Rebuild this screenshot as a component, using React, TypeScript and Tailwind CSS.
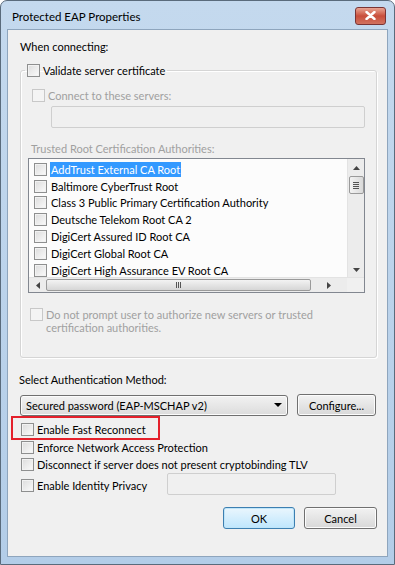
import React from 'react';

const font = "font-['Segoe_UI','Lato',sans-serif]";

const certs = [
  'AddTrust External CA Root',
  'Baltimore CyberTrust Root',
  'Class 3 Public Primary Certification Authority',
  'Deutsche Telekom Root CA 2',
  'DigiCert Assured ID Root CA',
  'DigiCert Global Root CA',
  'DigiCert High Assurance EV Root CA',
];

function Check({ disabled }: { disabled?: boolean }) {
  return (
    <span
      className={`inline-block w-[13px] h-[13px] shrink-0 border ${
        disabled
          ? 'border-[#c8c8c8] bg-[#f4f4f4]'
          : 'border-[#8e8f8f] bg-linear-to-br from-[#dcdcdc] to-[#fbfbfb] shadow-[inset_0_0_0_1px_#f2f2f2]'
      }`}
    />
  );
}

function Button({ label, primary }: { label: string; primary?: boolean }) {
  return (
    <div
      className={`h-[22px] flex items-center justify-center rounded-[3px] border text-black ${
        primary
          ? 'border-[#3c7fb1] bg-linear-to-b from-[#eaf6fd] to-[#bee6fd] shadow-[inset_0_0_0_1px_#bfe5f9]'
          : 'border-[#707070] bg-linear-to-b from-[#f2f2f2] to-[#d8d8d8] shadow-[inset_0_0_0_1px_#fcfcfc]'
      }`}
    >
      {label}
    </div>
  );
}

export default function App() {
  return (
    <div className={`w-[395px] h-[565px] flex flex-col rounded-t-[7px] border border-[#5a6b7c] bg-linear-to-b from-[#c4d9ee] to-[#b3cde8] ${font} text-[11px] leading-[15px] text-black`}>
      {/* title bar */}
      <div className="h-[28px] shrink-0 flex items-center justify-between pl-[11px] pr-[8px] pt-[2px]">
        <span className="text-[11.5px]">Protected EAP Properties</span>
        <div className="w-[31px] h-[18px] mb-[1px] rounded-[3px] border border-[#7a3434] bg-linear-to-b from-[#e8a493] via-[#c84d3a] to-[#d1725f] flex items-center justify-center">
          <svg width="11" height="9" viewBox="0 0 11 9">
            <path d="M1.5 1 L9.5 8 M9.5 1 L1.5 8" stroke="#fff" strokeWidth="2.4" strokeLinecap="round" />
          </svg>
        </div>
      </div>

      {/* client area */}
      <div className="flex-1 mx-[6px] mb-[7px] bg-[#f0f0f0] border border-[#8ea5bd] flex flex-col pl-[11px] pr-[10px]">
        <div className="mt-[9px] ml-[1px]">When connecting:</div>

        <fieldset className="mt-[9px] ml-[1px] h-[295px] border border-[#d5d5d5] rounded-[3px] shadow-[inset_1px_1px_0_#fff,1px_1px_0_#fff] px-[7px]">
          <legend className="-ml-[3px] px-[2px] flex items-center gap-[3px]">
            <Check />
            <span>Validate server certificate</span>
          </legend>

          <div className="mt-[10px] ml-[4px] flex items-center gap-[3px] text-[#a0a0a0]">
            <Check disabled />
            <span>Connect to these servers:</span>
          </div>
          <div className="mt-[3px] ml-[23px] mr-[4px] h-[22px] border border-[#cfcfcf] rounded-[2px] bg-[#f0f0f0]" />

          <div className="mt-[13px] ml-[3px] text-[#a0a0a0]">Trusted Root Certification Authorities:</div>

          <div className="mt-[2px] mr-[4px] h-[135px] border border-[#828790] bg-[#fcfcfc] flex flex-col">
            <div className="flex-1 flex min-h-0">
              <div className="flex-1 pt-[2px] pl-[5px] flex flex-col overflow-hidden">
                {certs.map((c, i) => (
                  <div key={c} className="h-[16.8px] shrink-0 flex items-center gap-[4px]">
                    <Check />
                    <span className={i === 0 ? 'bg-[#3399ff] text-white px-[1px] -ml-[1px]' : ''}>{c}</span>
                  </div>
                ))}
              </div>
              {/* vertical scrollbar */}
              <div className="w-[17px] bg-[#ececec] border-l border-[#e3e3e3] flex flex-col items-center">
                <div className="h-[17px] flex items-center justify-center">
                  <svg width="7" height="4" viewBox="0 0 7 4"><path d="M0 4 L3.5 0 L7 4 Z" fill="#444" /></svg>
                </div>
                <div className="w-[15px] h-[18px] rounded-[2px] border border-[#9a9a9a] bg-linear-to-r from-[#f3f3f3] to-[#d9d9d9] flex flex-col items-center justify-center gap-[1px]">
                  <span className="w-[6px] h-px bg-[#555]" />
                  <span className="w-[6px] h-px bg-[#555]" />
                  <span className="w-[6px] h-px bg-[#555]" />
                  <span className="w-[6px] h-px bg-[#555]" />
                </div>
                <div className="flex-1" />
                <div className="h-[14px] flex items-center justify-center">
                  <svg width="7" height="4" viewBox="0 0 7 4"><path d="M0 0 L3.5 4 L7 0 Z" fill="#444" /></svg>
                </div>
              </div>
            </div>
            {/* horizontal scrollbar */}
            <div className="h-[15px] shrink-0 flex bg-[#ececec] border-t border-[#e3e3e3]">
              <div className="w-[17px] flex items-center justify-center">
                <svg width="4" height="7" viewBox="0 0 4 7"><path d="M4 0 L0 3.5 L4 7 Z" fill="#444" /></svg>
              </div>
              <div className="w-[265px] my-px rounded-[2px] border border-[#9a9a9a] bg-linear-to-b from-[#f3f3f3] to-[#d6d6d6] flex items-center justify-center">
                <div className="flex gap-[1px] h-[6px]">
                  <span className="w-px bg-[#555]" />
                  <span className="w-px bg-[#555]" />
                  <span className="w-px bg-[#555]" />
                </div>
              </div>
              <div className="flex-1 flex items-center justify-center">
                <svg width="4" height="7" viewBox="0 0 4 7"><path d="M0 0 L4 3.5 L0 7 Z" fill="#444" /></svg>
              </div>
              <div className="w-[17px] bg-[#f0f0f0]" />
            </div>
          </div>

          <div className="mt-[15px] ml-[2px] flex items-start gap-[3px] text-[#a0a0a0] leading-[13px]">
            <Check disabled />
            <span>
              Do not prompt user to authorize new servers or trusted
              <br />
              certification authorities.
            </span>
          </div>
        </fieldset>

        <div className="mt-[14px]">Select Authentication Method:</div>

        <div className="mt-[7px] flex items-center">
          <div className="w-[268px] h-[21px] ml-[1px] rounded-[3px] border border-[#707070] bg-linear-to-b from-[#f2f2f2] to-[#dcdcdc] shadow-[inset_0_0_0_1px_#fcfcfc] flex items-center justify-between pl-[5px] pr-[5px]">
            <span>Secured password (EAP-MSCHAP v2)</span>
            <svg width="8" height="4" viewBox="0 0 8 4"><path d="M0 0 L8 0 L4 4 Z" fill="#000" /></svg>
          </div>
          <div className="ml-[9px] w-[79px]">
            <Button label="Configure..." />
          </div>
        </div>

        <div className="mt-[4px] flex flex-col ml-[2px]">
          <div className="relative h-[18px] flex items-center gap-[3px]">
            <span className="absolute -left-[10px] -top-[4px] w-[149px] h-[24px] border-[2px] border-[#e4202b]" />
            <Check />
            <span>Enable Fast Reconnect</span>
          </div>
          <div className="h-[18px] flex items-center gap-[3px]">
            <Check />
            <span>Enforce Network Access Protection</span>
          </div>
          <div className="h-[17px] flex items-center gap-[3px]">
            <Check />
            <span>Disconnect if server does not present cryptobinding TLV</span>
          </div>
          <div className="h-[22px] mt-[1px] flex items-center gap-[3px]">
            <Check />
            <span className="w-[127px]">Enable Identity Privacy</span>
            <div className="w-[169px] h-[22px] mt-[-3px] border border-[#cfcfcf] rounded-[2px] bg-[#f0f0f0]" />
          </div>
        </div>

        <div className="mt-[11px] flex justify-end gap-[9px]">
          <div className="w-[72px]">
            <Button label="OK" primary />
          </div>
          <div className="w-[73px]">
            <Button label="Cancel" />
          </div>
        </div>
      </div>
    </div>
  );
}
